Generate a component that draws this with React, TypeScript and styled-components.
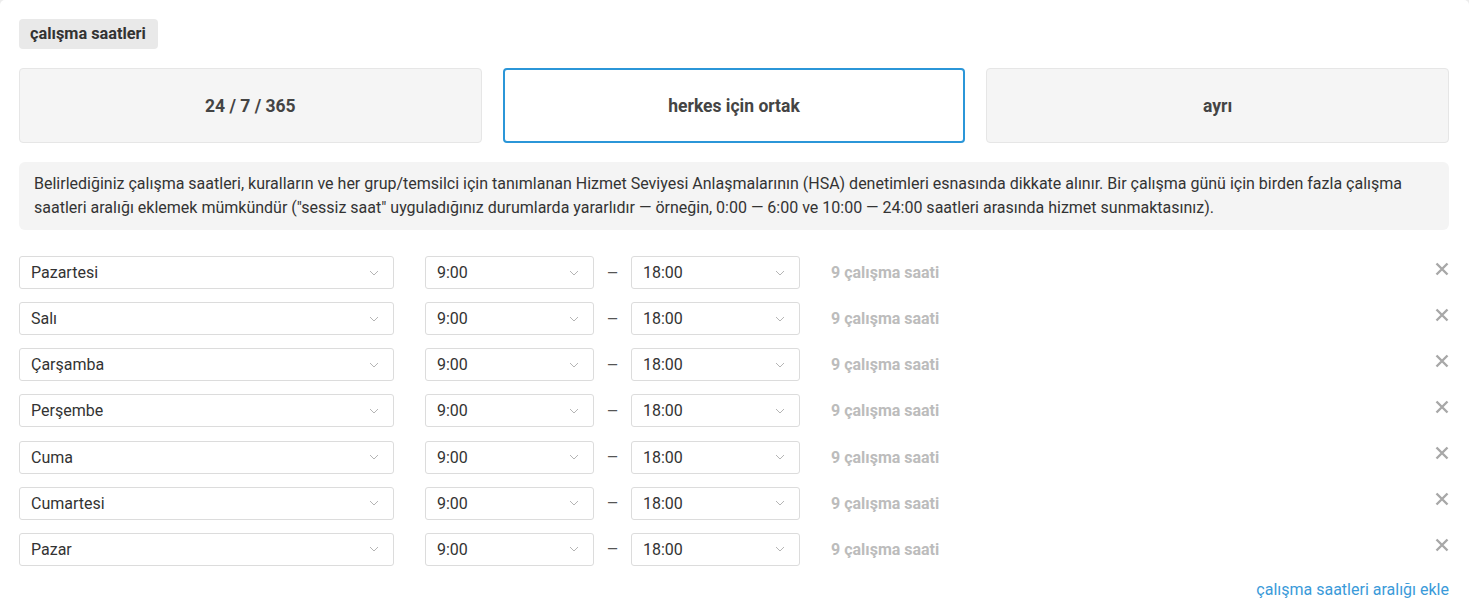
import * as React from "react";
import styled, { createGlobalStyle } from "styled-components";

const GlobalStyle = createGlobalStyle`
  html, body {
    margin: 0;
    padding: 0;
    background: #ececec;
    font-family: Roboto, "Liberation Sans", Arial, sans-serif;
    color: #333;
  }
`;

const Card = styled.div`
  width: 1469px;
  min-height: 640px;
  box-sizing: border-box;
  padding: 19px 20px 0 19px;
  background: #fff;
  border-radius: 5px;
`;

const Badge = styled.div`
  display: inline-block;
  background: #e9e9e9;
  border-radius: 4px;
  padding: 0 12px 0 11px;
  height: 30px;
  line-height: 30px;
  font-size: 16.3px;
  font-weight: 700;
  color: #333;
`;

const Tabs = styled.div`
  display: grid;
  grid-template-columns: repeat(3, 1fr);
  gap: 21px;
  margin-top: 19px;
`;

const Tab = styled.div<{ $active?: boolean }>`
  height: 75px;
  box-sizing: border-box;
  display: flex;
  align-items: center;
  justify-content: center;
  border-radius: 4px;
  background: ${(p) => (p.$active ? "#fff" : "#f5f5f5")};
  border: ${(p) => (p.$active ? "2px solid #2b96d8" : "1px solid #e6e6e6")};
  font-size: 17.5px;
  font-weight: 700;
  color: #444;
`;

const Info = styled.div`
  margin-top: 19px;
  background: #f4f4f4;
  border-radius: 6px;
  padding: 10px 15px;
  font-size: 16px;
  line-height: 24px;
  color: #333;
`;

const Rows = styled.div`
  display: flex;
  flex-direction: column;
  gap: 13.17px;
  margin-top: 26px;
`;

const Row = styled.div`
  display: flex;
  align-items: center;
  height: 33px;
`;

const SelectBox = styled.div<{ $w: number }>`
  width: ${(p) => p.$w}px;
  height: 33px;
  box-sizing: border-box;
  border: 1px solid #dcdcdc;
  border-radius: 3px;
  display: flex;
  align-items: center;
  justify-content: space-between;
  padding: 0 14px 0 11px;
  font-size: 16px;
  color: #333;
  background: #fff;
`;

const Spacer = styled.div`
  width: 31px;
`;

const Dash = styled.div`
  width: 37px;
  text-align: center;
  font-size: 14px;
  color: #555;
`;

const Hours = styled.div`
  margin-left: 31px;
  flex: 1;
  font-size: 16px;
  font-weight: 700;
  color: #bcbcbc;
`;

const Remove = styled.div`
  width: 14px;
  display: flex;
  justify-content: center;
  margin-top: -8px;
`;

const Footer = styled.div`
  display: flex;
  justify-content: flex-end;
  margin-top: 14px;
`;

const AddLink = styled.a`
  font-size: 16px;
  color: #3a9ad9;
  cursor: pointer;
`;

const Chevron = () => (
  <svg width="10" height="6" viewBox="0 0 10 6">
    <path d="M1 1l4 4 4-4" fill="none" stroke="#b5b5b5" strokeWidth="1" />
  </svg>
);

const Cross = () => (
  <svg width="14" height="14" viewBox="0 0 14 14">
    <path d="M1.5 1.5l11 11M12.5 1.5l-11 11" stroke="#a8a8a8" strokeWidth="2.4" />
  </svg>
);

const days = ["Pazartesi", "Salı", "Çarşamba", "Perşembe", "Cuma", "Cumartesi", "Pazar"];

const Select = ({ value, width }: { value: string; width: number }) => (
  <SelectBox $w={width}>
    <span>{value}</span>
    <Chevron />
  </SelectBox>
);

export default function App() {
  return (
    <>
      <GlobalStyle />
      <Card>
        <Badge>çalışma saatleri</Badge>
        <Tabs>
          <Tab>24 / 7 / 365</Tab>
          <Tab $active>herkes için ortak</Tab>
          <Tab>ayrı</Tab>
        </Tabs>
        <Info>
          Belirlediğiniz çalışma saatleri, kuralların ve her grup/temsilci için tanımlanan Hizmet Seviyesi
          Anlaşmalarının (HSA) denetimleri esnasında dikkate alınır. Bir çalışma günü için birden fazla çalışma
          saatleri aralığı eklemek mümkündür ("sessiz saat" uyguladığınız durumlarda yararlıdır — örneğin, 0:00 —
          6:00 ve 10:00 — 24:00 saatleri arasında hizmet sunmaktasınız).
        </Info>
        <Rows>
          {days.map((d) => (
            <Row key={d}>
              <Select value={d} width={375} />
              <Spacer />
              <Select value="9:00" width={169} />
              <Dash>—</Dash>
              <Select value="18:00" width={169} />
              <Hours>9 çalışma saati</Hours>
              <Remove>
                <Cross />
              </Remove>
            </Row>
          ))}
        </Rows>
        <Footer>
          <AddLink>çalışma saatleri aralığı ekle</AddLink>
        </Footer>
      </Card>
    </>
  );
}
